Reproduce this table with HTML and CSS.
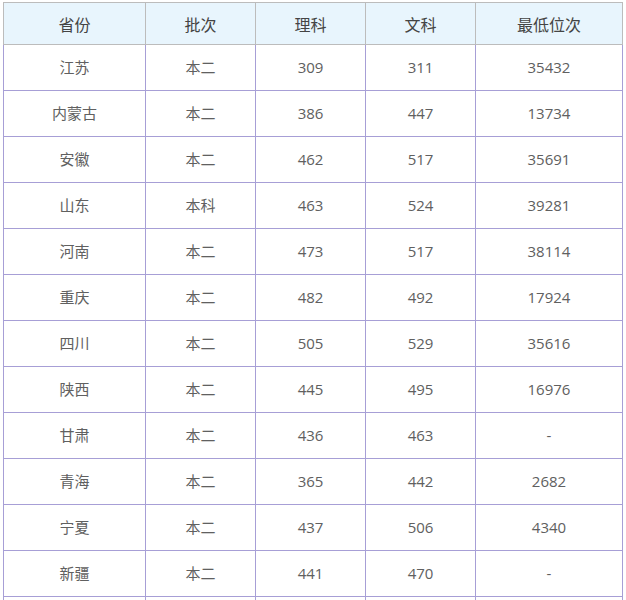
FILE: index.html
```html
<!DOCTYPE html>
<html lang="zh-CN">
<head>
<meta charset="utf-8">
<title>录取分数</title>
<link rel="stylesheet" href="styles.css">
</head>
<body>
<table class="score-table">
  <thead>
    <tr><th class="c1">省份</th><th class="c2">批次</th><th class="c3">理科</th><th class="c4">文科</th><th class="c5">最低位次</th></tr>
  </thead>
  <tbody>
    <tr><td>江苏</td><td>本二</td><td>309</td><td>311</td><td>35432</td></tr>
    <tr><td>内蒙古</td><td>本二</td><td>386</td><td>447</td><td>13734</td></tr>
    <tr><td>安徽</td><td>本二</td><td>462</td><td>517</td><td>35691</td></tr>
    <tr><td>山东</td><td>本科</td><td>463</td><td>524</td><td>39281</td></tr>
    <tr><td>河南</td><td>本二</td><td>473</td><td>517</td><td>38114</td></tr>
    <tr><td>重庆</td><td>本二</td><td>482</td><td>492</td><td>17924</td></tr>
    <tr><td>四川</td><td>本二</td><td>505</td><td>529</td><td>35616</td></tr>
    <tr><td>陕西</td><td>本二</td><td>445</td><td>495</td><td>16976</td></tr>
    <tr><td>甘肃</td><td>本二</td><td>436</td><td>463</td><td>-</td></tr>
    <tr><td>青海</td><td>本二</td><td>365</td><td>442</td><td>2682</td></tr>
    <tr><td>宁夏</td><td>本二</td><td>437</td><td>506</td><td>4340</td></tr>
    <tr><td>新疆</td><td>本二</td><td>441</td><td>470</td><td>-</td></tr>
    <tr class="next"><td></td><td></td><td></td><td></td><td></td></tr>
  </tbody>
</table>
</body>
</html>
```
FILE: styles.css
```css
html, body {
  margin: 0;
  padding: 0;
  background: #ffffff;
}
body {
  padding: 2px 0 0 3px;
  font-family: "Open Sans", "Noto Sans CJK SC", sans-serif;
}
.score-table {
  border-collapse: collapse;
  table-layout: fixed;
  width: 620px;
}
.score-table th,
.score-table td {
  text-align: center;
  vertical-align: middle;
  padding: 0;
}
.score-table th {
  height: 41px;
  background: #e8f5fd;
  border: 1px solid #bcbcbc;
  color: #444444;
  font-size: 16px;
  font-weight: normal;
}
.score-table td {
  height: 43px;
  padding-bottom: 2px;
  border: 1px solid #a79fd6;
  color: #606060;
  font-size: 15px;
}
.c1 { width: 141px; }
.c2 { width: 109px; }
.c3 { width: 109px; }
.c4 { width: 109px; }
.c5 { width: 146px; }
```
